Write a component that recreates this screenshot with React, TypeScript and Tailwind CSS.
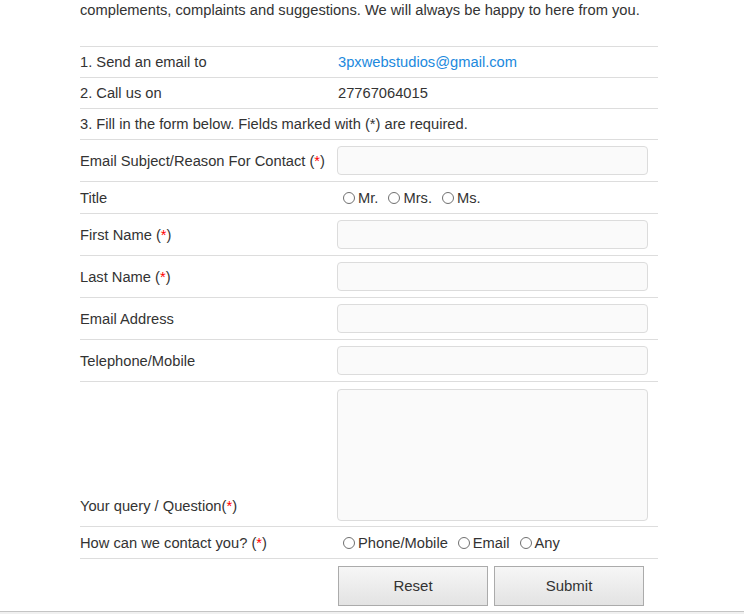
import React from "react";

const Req = () => (
  <span>
    (<span className="text-[#ff0000]">*</span>)
  </span>
);

const Radio = ({ label }: { label: string }) => (
  <span className="inline-flex items-center">
    <span className="ml-[6px] mr-[3px] inline-block h-[12px] w-[12px] rounded-full border border-[#707070] bg-white" />
    <span className="mr-[4px]">{label}</span>
  </span>
);

const Input = () => (
  <div className="h-[29px] w-[311px] rounded-[4px] border border-[#dcdcdc] bg-[#fafafa]" />
);

const InputRow = ({ label }: { label: React.ReactNode }) => (
  <div className="flex border-t border-[#dddddd]">
    <div className="flex w-[257px] items-center">{label}</div>
    <div className="flex-1 py-[6px]">
      <Input />
    </div>
  </div>
);

export default function App() {
  return (
    <div
      className="flex min-h-[614px] flex-col bg-white text-[14.7px] leading-[20px] text-[#333333]"
      style={{ fontFamily: '"Liberation Sans", Arial, sans-serif' }}
    >
      <div className="ml-[80px] w-[578px]">
        <p className="mb-[26px]">
          complements, complaints and suggestions. We will always be happy to here from you.
        </p>

        <div className="flex border-t border-[#dddddd] py-[5px]">
          <div className="w-[258px]">1. Send an email to</div>
          <div className="text-[#2189dd]">3pxwebstudios@gmail.com</div>
        </div>
        <div className="flex border-t border-[#dddddd] py-[5px]">
          <div className="w-[258px]">2. Call us on</div>
          <div>27767064015</div>
        </div>
        <div className="flex border-t border-[#dddddd] py-[5px]">
          <div>3. Fill in the form below. Fields marked with (*) are required.</div>
        </div>

        <InputRow
          label={
            <span>
              Email Subject/Reason For Contact <Req />
            </span>
          }
        />

        <div className="flex border-t border-[#dddddd] py-[5px]">
          <div className="flex h-[21px] w-[257px] items-center">Title</div>
          <div className="flex h-[21px] items-center">
            <Radio label="Mr." />
            <Radio label="Mrs." />
            <Radio label="Ms." />
          </div>
        </div>

        <InputRow
          label={
            <span>
              First Name <Req />
            </span>
          }
        />
        <InputRow
          label={
            <span>
              Last Name <Req />
            </span>
          }
        />
        <InputRow label={<span>Email Address</span>} />
        <InputRow label={<span>Telephone/Mobile</span>} />

        <div className="flex border-t border-[#dddddd]">
          <div className="flex w-[257px] items-end pb-[10px]">
            <span>
              Your query / Question<Req />
            </span>
          </div>
          <div className="flex-1 pt-[7px] pb-[5px]">
            <div className="h-[132px] w-[311px] rounded-[4px] border border-[#dcdcdc] bg-[#fafafa]" />
          </div>
        </div>

        <div className="flex border-t border-[#dddddd] py-[5px]">
          <div className="flex h-[21px] w-[257px] items-center">
            <span>
              How can we contact you? <Req />
            </span>
          </div>
          <div className="flex h-[21px] items-center">
            <Radio label="Phone/Mobile" />
            <Radio label="Email" />
            <Radio label="Any" />
          </div>
        </div>

        <div className="flex border-t border-[#dddddd] pt-[7px] pb-[5px]">
          <div className="w-[258px]" />
          <div className="flex gap-[6px]">
            <button className="h-[40px] w-[150px] border border-[#ababab] bg-gradient-to-b from-[#f6f6f6] to-[#e3e3e3] text-[15px] text-[#333333]">
              Reset
            </button>
            <button className="h-[40px] w-[150px] border border-[#ababab] bg-gradient-to-b from-[#f6f6f6] to-[#e3e3e3] text-[15px] text-[#333333]">
              Submit
            </button>
          </div>
        </div>
      </div>
      <div className="flex-1 border-t border-[#c4c4c4] bg-[#f0f0f0]" />
    </div>
  );
}
